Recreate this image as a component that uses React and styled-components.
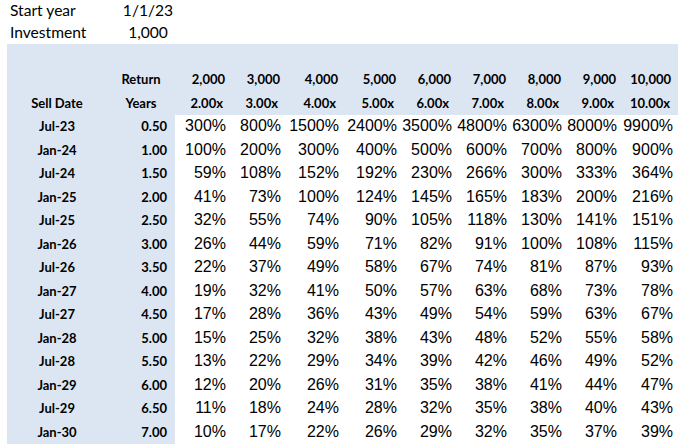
import React from "react";
import styled, { createGlobalStyle } from "styled-components";

const GlobalStyle = createGlobalStyle`
  body {
    margin: 0;
    background: #ffffff;
    color: #000000;
  }
`;

const BLUE = "#dce6f2";

const Sheet = styled.div`
  padding-left: 7px;
  width: 680px;
  height: 448px;
  overflow: hidden;
  box-sizing: border-box;
`;

const Grid = styled.table`
  border-collapse: collapse;
  table-layout: fixed;
  width: 671px;
`;

const Row = styled.tr`
  height: ${(props) => props.$h || 23.5}px;
`;

const InfoLabel = styled.td`
  font-family: Lato, "Liberation Sans", sans-serif;
  font-size: 15.6px;
  padding: 0 0 0 3px;
  text-align: left;
  white-space: nowrap;
`;

const InfoValue = styled.td`
  font-family: Lato, "Liberation Sans", sans-serif;
  font-size: 15.6px;
  padding: 0 0 0 14px;
  text-align: center;
  white-space: nowrap;
`;

const HeadCell = styled.td`
  background: ${BLUE};
  font-family: Lato, "Liberation Sans", sans-serif;
  font-weight: 700;
  font-size: 13px;
  padding: 0 ${(props) => props.$pr ?? 4}px 0 0;
  text-align: ${(props) => props.$align || "right"};
  white-space: nowrap;
`;

const DateCell = styled.td`
  background: ${BLUE};
  font-family: Lato, "Liberation Sans", sans-serif;
  font-weight: 700;
  font-size: 13px;
  padding: 0;
  text-align: center;
`;

const YearCell = styled.td`
  background: ${BLUE};
  font-family: Lato, "Liberation Sans", sans-serif;
  font-weight: 700;
  font-size: 13px;
  padding: 0 8px 0 0;
  text-align: right;
`;

const PctCell = styled.td`
  font-family: "Liberation Sans", Arial, sans-serif;
  font-size: 16px;
  padding: 0 ${(props) => props.$pr ?? 3}px 0 0;
  text-align: right;
  white-space: nowrap;
`;

const widths = [100, 68, 54, 55, 58, 58, 55, 55, 55, 55, 58];
const multiples = [2, 3, 4, 5, 6, 7, 8, 9, 10];

const rows = [];
for (let i = 0; i < 14; i++) {
  const years = (i + 1) * 0.5;
  const month = i % 2 === 0 ? "Jul" : "Jan";
  const yr = 23 + Math.ceil(i / 2);
  rows.push({ label: `${month}-${yr}`, years });
}

const pct = (m, y) => `${Math.round((Math.pow(m, 1 / y) - 1) * 100)}%`;

export default function App() {
  return (
    <>
      <GlobalStyle />
      <Sheet>
        <Grid>
          <colgroup>
            {widths.map((w, i) => (
              <col key={i} style={{ width: w }} />
            ))}
          </colgroup>
          <tbody>
            <Row $h={20.5}>
              <InfoLabel>Start year</InfoLabel>
              <InfoValue>1/1/23</InfoValue>
              <td colSpan={9} />
            </Row>
            <Row>
              <InfoLabel>Investment</InfoLabel>
              <InfoValue>1,000</InfoValue>
              <td colSpan={9} />
            </Row>
            <Row>
              <HeadCell colSpan={11} />
            </Row>
            <Row>
              <HeadCell />
              <HeadCell $align="center" $pr={0}>
                Return
              </HeadCell>
              {multiples.map((m, i) => (
                <HeadCell key={m} $pr={i === 8 ? 7 : 4}>
                  {(m * 1000).toLocaleString("en-US")}
                </HeadCell>
              ))}
            </Row>
            <Row>
              <HeadCell $align="center" $pr={0}>
                Sell Date
              </HeadCell>
              <HeadCell $align="center" $pr={0}>
                Years
              </HeadCell>
              {multiples.map((m, i) => (
                <HeadCell key={m} $pr={i === 8 ? 8 : 6}>
                  {m.toFixed(2)}x
                </HeadCell>
              ))}
            </Row>
            {rows.map((r) => (
              <Row key={r.label}>
                <DateCell>{r.label}</DateCell>
                <YearCell>{r.years.toFixed(2)}</YearCell>
                {multiples.map((m, i) => (
                  <PctCell key={m} $pr={i === 8 ? 5 : 3}>
                    {pct(m, r.years)}
                  </PctCell>
                ))}
              </Row>
            ))}
          </tbody>
        </Grid>
      </Sheet>
    </>
  );
}
